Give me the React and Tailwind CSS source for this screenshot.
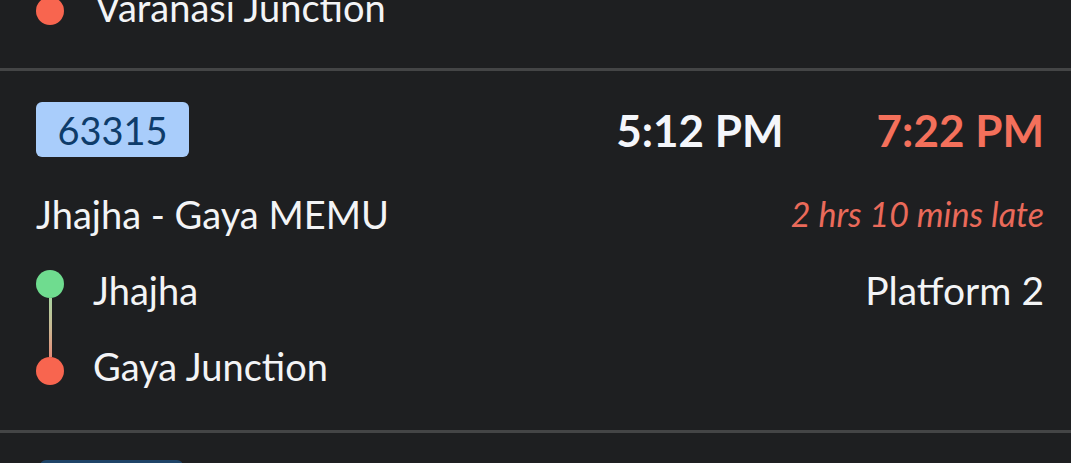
import React from "react";

export default function App() {
  const font = { fontFamily: "Lato, 'Open Sans', sans-serif" };
  return (
    <div className="w-[1071px] h-[463px] overflow-hidden bg-[#1e1f21] text-[#f3f4f6]" style={font}>
      {/* tail of previous card */}
      <div className="h-[68px] overflow-hidden">
        <div className="flex items-center h-[50px] -mt-[16px] pl-[36px]">
          <div className="w-[28px] h-[28px] rounded-full bg-[#f8654f] mt-[4px]" />
          <div className="ml-[31px] text-[38px] leading-none -mt-[4px]">Varanasi Junction</div>
        </div>
      </div>
      <div className="h-[3px] bg-[#444546]" />

      {/* card */}
      <div className="pl-[36px] pr-[27px] pt-[31px]">
        <div className="flex items-center justify-between h-[55px]">
          <div className="h-[55px] w-[153px] rounded-[6px] bg-[#a9cdfb] text-[#0e3c6a] text-[38px] leading-none flex items-center justify-center">
            63315
          </div>
          <div className="flex items-center gap-[93px] font-bold text-[44px] leading-none">
            <span className="text-[#f4f6fb]">5:12 PM</span>
            <span className="text-[#f4705b]">7:22 PM</span>
          </div>
        </div>

        <div className="flex items-center justify-between h-[40px] mt-[37px]">
          <div className="text-[38px] leading-none">Jhajha - Gaya MEMU</div>
          <div className="text-[34px] italic leading-none text-[#ea6a5a]">2 hrs 10 mins late</div>
        </div>

        <div className="flex mt-[36px]">
          <div className="flex flex-col items-center w-[28px]">
            <div className="w-[28px] h-[28px] rounded-full bg-[#6fdc8f]" />
            <div className="w-[3px] h-[59px] bg-gradient-to-b from-[#a7d3a0] via-[#c9b993] to-[#e48a78]" />
            <div className="w-[28px] h-[28px] rounded-full bg-[#f8654f]" />
          </div>
          <div className="flex-1 ml-[29px] text-[38px] leading-none">
            <div className="flex items-center justify-between h-[40px]">
              <span>Jhajha</span>
              <span className="text-[39px]">Platform 2</span>
            </div>
            <div className="flex items-center h-[40px] mt-[36px]">
              <span>Gaya Junction</span>
            </div>
          </div>
        </div>
      </div>

      <div className="h-[3px] bg-[#444546] mt-[44px]" />
      <div className="pl-[40px] pt-[27px]">
        <div className="h-[55px] w-[143px] rounded-[6px] bg-[#1f4468]" />
      </div>
    </div>
  );
}
